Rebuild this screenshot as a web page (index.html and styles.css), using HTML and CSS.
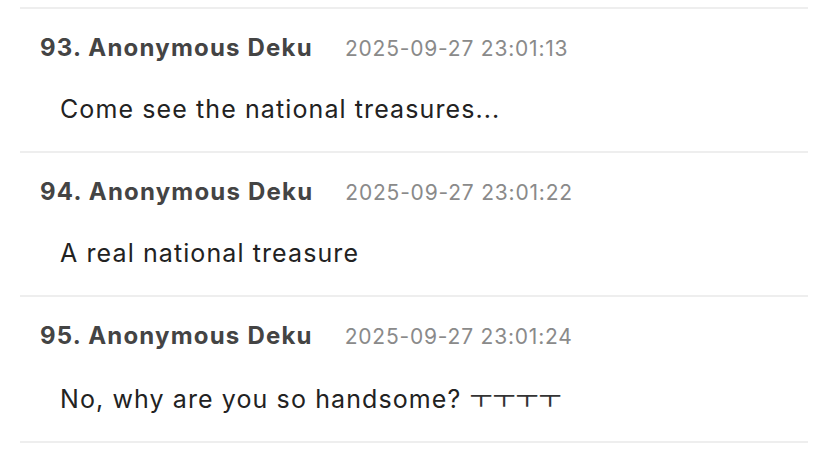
FILE: index.html
```html
<!DOCTYPE html>
<html lang="en">
<head>
<meta charset="utf-8">
<link rel="stylesheet" href="styles.css">
</head>
<body>
<ul class="comments">
  <li class="comment">
    <div class="meta"><span class="author">93. Anonymous Deku</span><span class="time">2025-09-27 23:01:13</span></div>
    <p class="text">Come see the national treasures...</p>
  </li>
  <li class="comment">
    <div class="meta"><span class="author">94. Anonymous Deku</span><span class="time">2025-09-27 23:01:22</span></div>
    <p class="text">A real national treasure</p>
  </li>
  <li class="comment">
    <div class="meta"><span class="author">95. Anonymous Deku</span><span class="time">2025-09-27 23:01:24</span></div>
    <p class="text">No, why are you so handsome? <span class="kr">ㅜㅜㅜㅜ</span></p>
  </li>
</ul>
</body>
</html>
```

FILE: styles.css
```css
html, body {
  margin: 0;
  padding: 0;
  background: #ffffff;
}

body {
  font-family: Inter, "Noto Sans", "Liberation Sans", "Noto Sans CJK KR", sans-serif;
  padding-top: 7px;
}

.comments {
  list-style: none;
  margin: 0 20px;
  padding: 0;
  border-top: 2px solid #eeeeee;
}

.comment {
  border-bottom: 2px solid #eeeeee;
  padding: 24px 0 26px 0;
}

.meta {
  display: flex;
  align-items: baseline;
  padding-left: 20px;
  height: 30px;
  line-height: 30px;
}

.author {
  font-size: 24px;
  font-weight: 700;
  letter-spacing: 1.2px;
  color: #444444;
}

.time {
  margin-left: 32px;
  font-size: 21px;
  letter-spacing: 0.8px;
  color: #8a8a8a;
}

.text {
  margin: 30px 0 0 0;
  padding-left: 40px;
  font-size: 25px;
  line-height: 32px;
  letter-spacing: 1.1px;
  color: #222222;
}

.kr {
  font-family: "Noto Sans CJK KR", sans-serif;
  font-weight: 400;
  letter-spacing: 0;
  color: #333333;
}
```
